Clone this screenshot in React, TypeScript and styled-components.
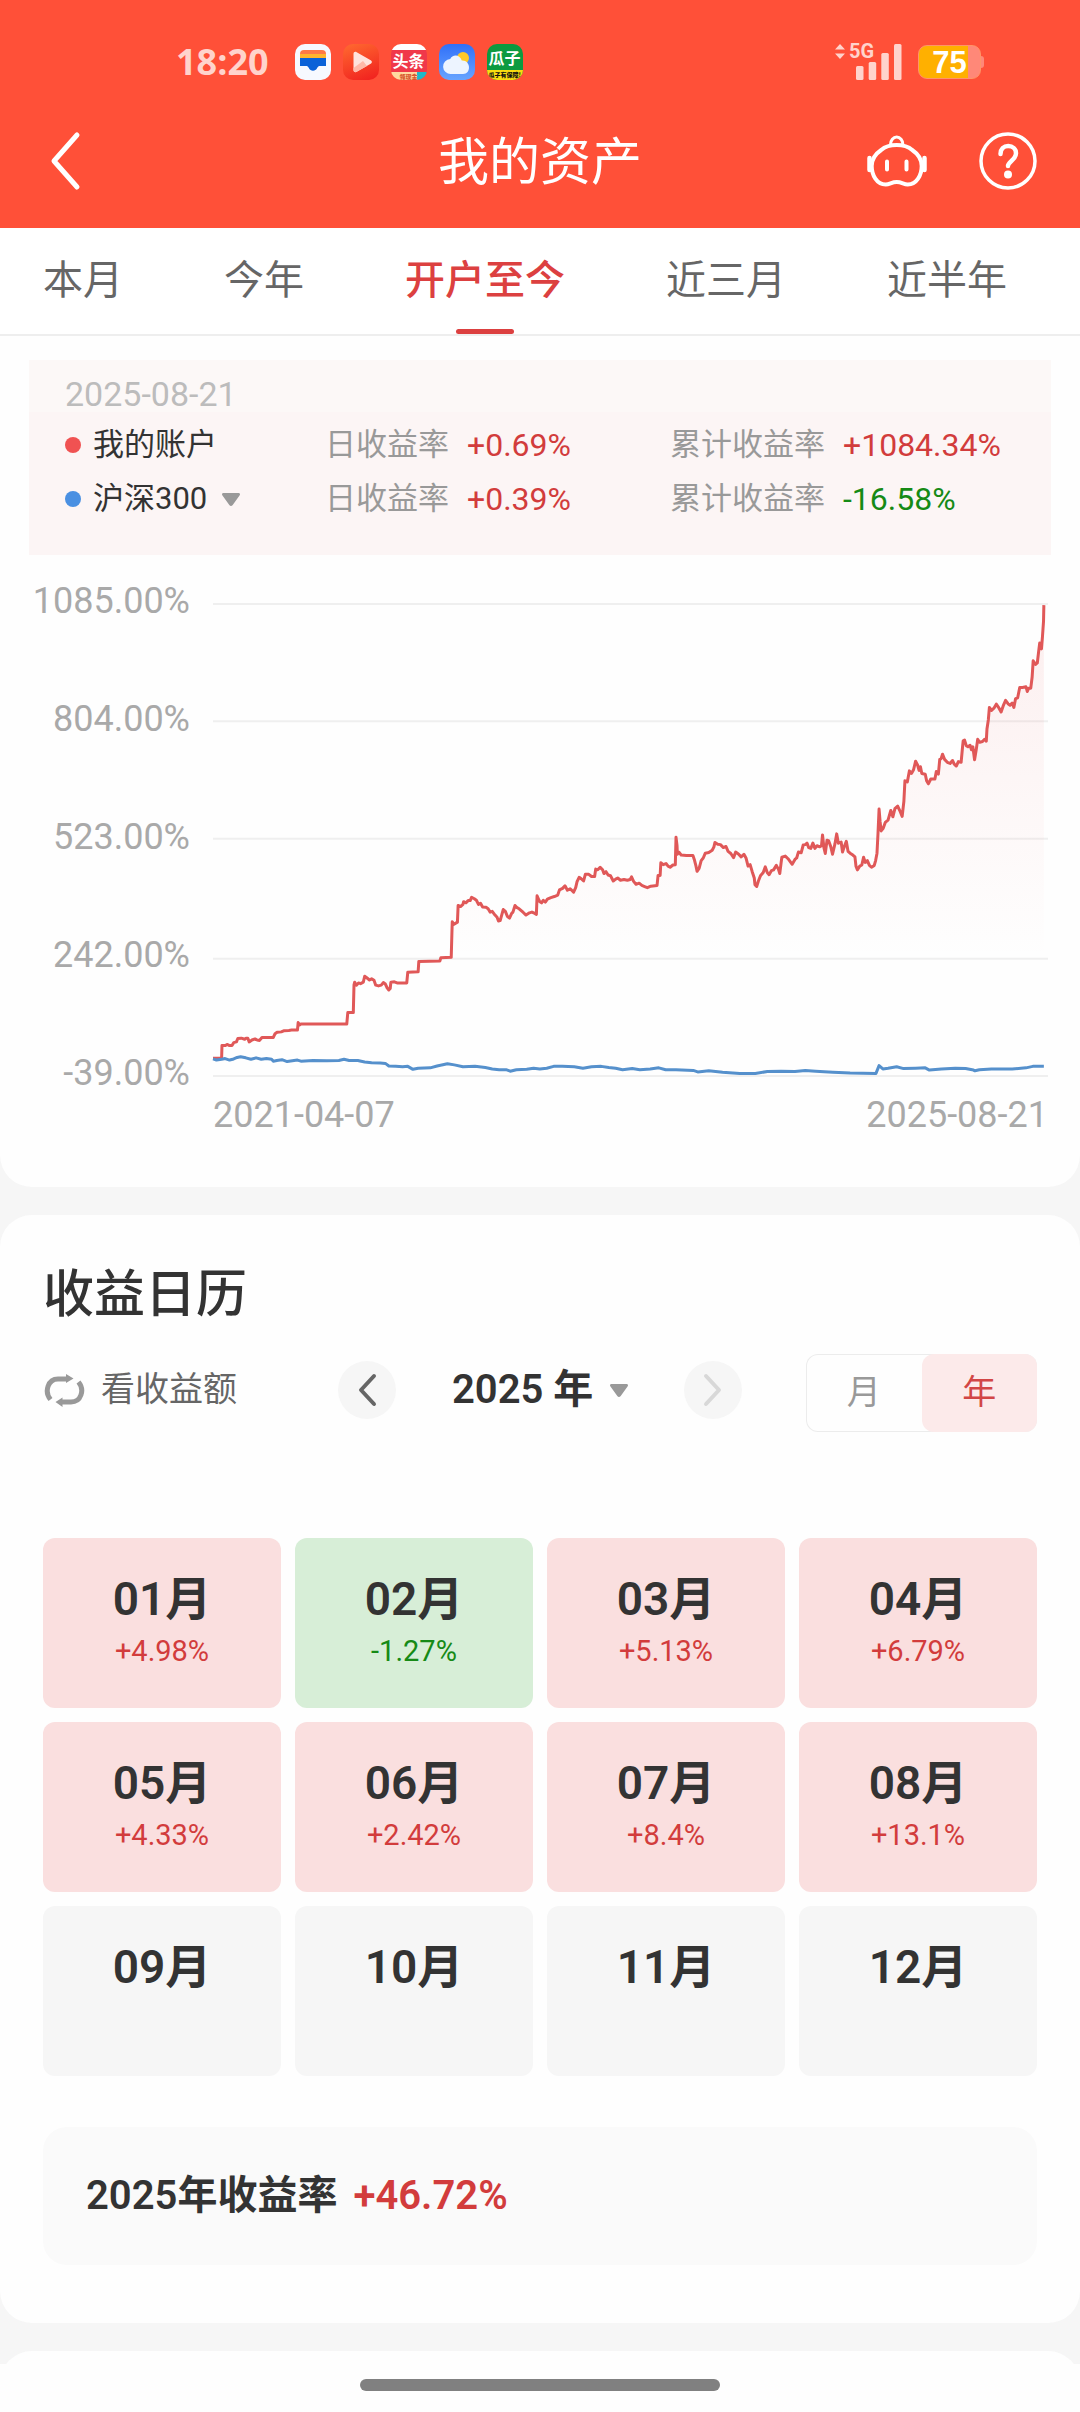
import React from 'react';
import styled, { createGlobalStyle, css } from 'styled-components';

const RED = '#d23c3c';
const GREEN = '#168a16';

const GlobalStyle = createGlobalStyle`
  * { box-sizing: border-box; }
  body {
    margin: 0;
    background: #f6f6f6;
    color: #333;
    font-family: Roboto, "Noto Sans CJK SC", sans-serif;
  }
  button, select {
    margin: 0;
    padding: 0;
    border: 0;
    background: none;
    color: inherit;
    font: inherit;
    cursor: pointer;
  }
  svg { display: block; flex: none; }
`;

/* ---------- top bar ---------- */

const Header = styled.header`
  padding-top: 32px;
  background: #ff5038;
  color: #fff;
`;

const StatusBar = styled.div`
  display: flex;
  justify-content: space-between;
  align-items: center;
  height: 60px;
  padding: 0 96px 0 176px;
`;

const StatusGroup = styled.div<{ $gap: number }>`
  display: flex;
  align-items: center;
  gap: ${(p) => p.$gap}px;
`;

const Clock = styled.time`
  margin-right: 14px;
  color: #ffd3cc;
  font: 700 36px/40px "Open Sans", sans-serif;
`;

const AppIcon = styled.span<{ $bg: string }>`
  display: flex;
  flex-direction: column;
  align-items: center;
  width: 36px;
  height: 36px;
  overflow: hidden;
  border-radius: 10px;
  background: ${(p) => p.$bg};
  color: #fff;
`;

const IconWord = styled.span<{ $low?: boolean }>`
  font: 700 16px/26px "Noto Sans CJK SC", sans-serif;
  ${(p) => p.$low && 'padding-top: 4px; line-height: 24px;'}
`;

const IconStrip = styled.span<{ $bg: string; $ink: string }>`
  width: 100%;
  height: 12px;
  background: ${(p) => p.$bg};
  color: ${(p) => p.$ink};
  font: 900 6px/9px "Noto Sans CJK SC", sans-serif;
  text-align: center;
  white-space: nowrap;
`;

const Network = styled.span`
  position: relative;
  display: block;
`;

const NetworkLabel = styled.span`
  position: absolute;
  left: 14px;
  top: -3px;
  color: #ffd3cc;
  font: 700 20px/22px Roboto, sans-serif;
`;

const Battery = styled.span`
  display: flex;
  align-items: center;
`;

const BatteryBody = styled.span`
  width: 63px;
  height: 34px;
  border-radius: 9px;
  border: 1px solid #ff9468;
  background: linear-gradient(90deg, #ffb000 80%, #ff8878 80%);
  font: 700 31px/34px "Liberation Sans", sans-serif;
  text-align: center;
`;

const BatteryTip = styled.span`
  width: 3px;
  height: 12px;
  border-radius: 0 3px 3px 0;
  background: #ff8878;
`;

const TitleBar = styled.div`
  display: grid;
  grid-template-columns: 1fr auto 1fr;
  align-items: center;
  height: 136px;
  padding: 2px 43px 0;
`;

const PageTitle = styled.h1`
  margin: 0;
  padding-top: 4px;
  font-size: 51px;
  font-weight: 400;
  line-height: 60px;
`;

const TitleActions = styled.div`
  display: flex;
  justify-content: flex-end;
  align-items: center;
  gap: 52px;
`;

const IconButton = styled.button`
  display: block;
  justify-self: start;
`;

/* ---------- period tabs ---------- */

const Tabs = styled.nav`
  display: flex;
  gap: 101px;
  height: 108px;
  padding: 0 43px;
  overflow: hidden;
  border-bottom: 2px solid #eee;
  background: #fff;
`;

const Tab = styled.button<{ $active: boolean }>`
  display: flex;
  flex-direction: column;
  align-items: center;
  justify-content: space-between;
  padding-top: 29px;
  font-size: 40px;
  line-height: 48px;
  white-space: nowrap;
  color: #666;
  ${(p) =>
    p.$active &&
    css`
      color: #dc4040;
      font-weight: 500;
      &::after {
        content: '';
        width: 58px;
        height: 5px;
        border-radius: 3px;
        background: #dc4040;
      }
    `}
`;

/* ---------- performance card ---------- */

const Card = styled.section<{ $first?: boolean }>`
  overflow: hidden;
  border-radius: ${(p) => (p.$first ? '0 0 32px 32px' : '32px')};
  background: #fefefe;
`;

const Legend = styled.div`
  margin: 24px 29px 0;
  padding: 10px 36px 29px;
  background: linear-gradient(#fcf8f7 52px, #fcf5f5 52px);
`;

const LegendDate = styled.time`
  display: block;
  color: #bcbcbc;
  font-size: 34px;
  line-height: 48px;
`;

const LegendRow = styled.div`
  display: grid;
  grid-template-columns: 260fr 345fr 345fr;
  align-items: center;
  height: 54px;
  font-size: 31px;
  line-height: 40px;
  white-space: nowrap;
`;

const SeriesName = styled.label`
  display: flex;
  align-items: center;
`;

const Dot = styled.i<{ $color: string }>`
  width: 16px;
  height: 16px;
  margin-right: 12px;
  border-radius: 50%;
  background: ${(p) => p.$color};
`;

const Picker = styled.select`
  appearance: none;
  outline: none;
`;

const BenchmarkPicker = styled(Picker)`
  margin-right: 14px;
`;

const Metric = styled.span`
  display: flex;
  gap: 18px;
  color: #999;
`;

const Rate = styled.span<{ $value: string }>`
  color: ${(p) => (p.$value.startsWith('-') ? GREEN : RED)};
`;

const LegendRate = styled(Rate)`
  font-size: 32px;
`;

const Chart = styled.div`
  display: flex;
  gap: 23px;
  padding: 26px 32px 52px 0;
  color: #a9a9a9;
  font-size: 36px;
  line-height: 40px;
`;

const ValueAxis = styled.div`
  display: flex;
  flex-direction: column;
  justify-content: space-between;
  width: 190px;
  height: 512px;
  text-align: right;
`;

const Plot = styled.div`
  flex: 1;
  padding-top: 23px;
`;

const PlotArea = styled.svg`
  width: 100%;
  height: 472px;
  overflow: visible;
`;

const DateAxis = styled.div`
  display: flex;
  justify-content: space-between;
  margin-top: 19px;
`;

/* ---------- calendar card ---------- */

const CalendarCard = styled(Card)`
  margin-top: 28px;
  padding: 50px 43px 58px;
`;

const SectionTitle = styled.h2`
  margin: 0;
  font-size: 51px;
  font-weight: 500;
  line-height: 60px;
`;

const Controls = styled.div`
  display: flex;
  align-items: center;
  height: 78px;
  margin-top: 29px;
`;

const SwitchMode = styled.button`
  display: flex;
  flex: 1;
  align-items: flex-end;
  gap: 16px;
  padding-bottom: 8px;
  color: #666;
  font-size: 34px;
  line-height: 48px;
`;

const YearNav = styled.div`
  display: flex;
  justify-content: space-between;
  align-items: center;
  width: 404px;
  margin-right: 64px;
  padding-bottom: 6px;
`;

const RoundButton = styled.button`
  display: grid;
  place-items: center;
  width: 58px;
  height: 58px;
  border-radius: 50%;
  background: #f6f6f6;
`;

const YearLabel = styled.label`
  display: flex;
  align-items: center;
  gap: 16px;
`;

const YearPicker = styled(Picker)`
  font-size: 40px;
  font-weight: 600;
  line-height: 48px;
`;

const Segmented = styled.div`
  display: flex;
  width: 231px;
  height: 78px;
  border-radius: 12px;
  box-shadow: inset 0 0 0 1px #ececec;
`;

const Segment = styled.button<{ $active: boolean }>`
  flex: 1;
  padding-bottom: 2px;
  border-radius: 12px;
  background: ${(p) => (p.$active ? '#fceaea' : 'transparent')};
  color: ${(p) => (p.$active ? '#d24646' : '#999')};
  font-size: 34px;
  line-height: 48px;
`;

const Months = styled.div`
  display: grid;
  grid-template-columns: repeat(4, 1fr);
  gap: 14px;
  margin-top: 106px;
`;

const MonthCell = styled.button<{ $tone: 'up' | 'down' | 'none' }>`
  display: flex;
  flex-direction: column;
  align-items: center;
  height: 170px;
  padding-top: 34px;
  border-radius: 12px;
  background: ${(p) => ({ up: '#fadfdf', down: '#d7eed7', none: '#f6f6f6' })[p.$tone]};
`;

const MonthName = styled.span`
  font-size: 46px;
  font-weight: 600;
  line-height: 54px;
`;

const MonthRate = styled(Rate)`
  font-size: 29px;
  line-height: 51px;
`;

const Summary = styled.p`
  display: flex;
  align-items: center;
  gap: 16px;
  height: 138px;
  margin: 51px 0 0;
  padding: 0 43px;
  border-radius: 24px;
  background: #fafafa;
  font-size: 40px;
  font-weight: 600;
  line-height: 48px;
`;

/* ---------- bottom ---------- */

const NextCardPeek = styled.div`
  height: 13px;
  margin-top: 28px;
  overflow: hidden;
  &::before {
    content: '';
    display: block;
    height: 64px;
    border-radius: 32px;
    background: #fefefe;
  }
`;

const GestureBar = styled.footer`
  display: flex;
  justify-content: center;
  height: 48px;
  padding-top: 15px;
  background: #fefefe;
  &::before {
    content: '';
    width: 360px;
    height: 12px;
    border-radius: 6px;
    background: #808080;
  }
`;

/* ---------- data ---------- */

const MIDPOINT = 1568;

const accountFirstHalf =
  '620,1318 645,1318 646,1284 655,1284 662,1281 668,1284 675,1284 680,1276 688,1274 692,1265 702,1264 712,1267 716,1264 721,1264 725,1274 733,1269 742,1266 748,1269 755,1270 762,1262 795,1262 800,1252 806,1248 818,1247 825,1244 840,1243 848,1242 865,1242 867,1222 872,1228 875,1226 1008,1226 1011,1195 1027,1195 1029,1120 1031,1113 1036,1121 1042,1115 1048,1117 1056,1113 1060,1097 1066,1101 1074,1107 1080,1104 1087,1108 1092,1121 1100,1123 1108,1121 1114,1114 1120,1118 1125,1128 1130,1134 1134,1130 1136,1113 1146,1112 1154,1115 1182,1115 1185,1086 1215,1085 1217,1057 1278,1056 1281,1047 1311,1046 1313,980 1314,950 1319,957 1329,951 1331,906 1338,909 1345,903 1347,896 1354,899 1360,893 1366,893 1370,884 1378,888 1384,892 1390,903 1396,900 1402,910 1412,911 1418,915 1424,924 1430,922 1438,932 1444,938 1448,948 1453,947 1458,930 1462,917 1468,922 1474,936 1480,940 1486,928 1490,924 1496,906 1502,912 1508,915 1514,920 1520,925 1528,932 1538,926 1545,924 1552,927 1558,930 1560,880 1566,893';

const accountSecondHalf =
  '0,896 5,899 10,892 16,897 22,889 32,885 42,882 52,878 57,864 66,860 73,853 80,865 88,861 98,870 104,858 108,842 114,830 120,834 127,840 132,822 142,822 150,828 159,828 162,808 168,810 175,803 182,810 186,820 192,815 198,824 205,826 213,840 220,835 226,832 234,838 244,836 254,838 262,836 266,829 272,841 279,849 288,846 296,852 304,855 312,858 322,854 340,852 343,825 349,825 351,791 358,796 366,793 372,800 378,803 386,797 393,796 395,722 398,745 399,768 403,762 410,770 425,771 444,771 448,782 453,800 456,814 462,806 468,785 474,778 480,765 490,763 500,757 505,748 508,736 516,741 524,742 532,750 540,747 546,760 554,766 562,777 568,762 576,767 584,775 592,768 598,778 604,800 610,796 616,815 622,832 624,850 629,855 634,840 640,826 648,817 654,802 660,818 665,823 672,812 678,810 686,798 692,808 696,820 700,790 702,776 712,773 720,780 732,795 740,782 745,778 750,762 758,764 764,743 770,742 775,738 780,750 786,752 792,738 798,752 804,745 812,748 817,745 820,716 824,750 828,766 833,730 838,732 844,748 849,768 856,740 861,713 866,738 874,735 878,762 884,745 889,733 894,760 900,765 908,770 914,775 917,800 921,810 928,800 934,797 939,776 944,790 950,785 956,798 962,803 970,798 974,785 978,765 981,710 984,646 987,680 990,705 996,698 1002,682 1010,676 1018,650 1024,667 1030,645 1038,638 1044,650 1051,666 1056,625 1059,570 1066,573 1072,543 1078,550 1084,540 1090,517 1096,528 1100,542 1104,532 1108,550 1118,552 1122,570 1127,578 1134,565 1146,565 1150,545 1156,552 1160,512 1164,510 1168,498 1174,512 1182,520 1190,523 1197,515 1202,525 1208,530 1214,518 1222,520 1226,480 1228,462 1232,460 1237,475 1242,478 1248,474 1252,486 1256,478 1261,513 1266,485 1270,458 1276,466 1284,464 1290,458 1295,463 1297,430 1301,405 1304,372 1310,380 1318,373 1324,363 1332,374 1338,384 1344,368 1351,353 1358,362 1364,366 1370,360 1375,372 1380,348 1386,346 1392,318 1400,318 1410,316 1414,329 1418,320 1424,320 1428,290 1431,246 1438,256 1443,252 1447,220 1450,198 1455,214 1458,180 1461,140 1462,96';

const benchmarkFirstHalf =
  '620,1320 630,1323 645,1321 655,1319 668,1323 680,1320 690,1316 700,1314 715,1317 730,1321 745,1317 760,1321 775,1319 790,1321 795,1326 805,1324 820,1322 835,1327 850,1325 865,1323 875,1326 910,1324 950,1325 985,1324 1000,1321 1015,1324 1040,1324 1060,1328 1080,1330 1105,1331 1120,1332 1130,1339 1150,1340 1170,1341 1185,1340 1200,1348 1215,1345 1250,1344 1270,1339 1300,1333 1320,1336 1345,1341 1380,1340 1410,1343 1430,1347 1450,1349 1470,1349 1482,1353 1500,1349 1530,1348 1550,1345';

const benchmarkSecondHalf =
  '0,1347 20,1345 40,1340 65,1340 100,1341 125,1345 150,1341 178,1340 200,1343 220,1345 240,1349 268,1346 290,1349 320,1347 345,1344 365,1349 395,1349 445,1351 458,1355 490,1352 530,1356 580,1359 625,1359 660,1354 700,1353 740,1354 770,1351 800,1353 850,1356 900,1358 975,1359 984,1338 995,1347 1010,1345 1035,1341 1055,1346 1090,1345 1118,1344 1130,1350 1165,1347 1205,1345 1235,1346 1258,1350 1262,1352 1275,1349 1310,1347 1370,1347 1410,1344 1430,1340 1462,1340';

/* Joins the two halves of a series into one polyline. */
const joinHalves = (first: string, second: string) =>
  first +
  ' ' +
  second
    .split(' ')
    .map((pair) => {
      const [x, y] = pair.split(',').map(Number);
      return `${x + MIDPOINT},${y}`;
    })
    .join(' ');

const accountLine = joinHalves(accountFirstHalf, accountSecondHalf);
const benchmarkLine = joinHalves(benchmarkFirstHalf, benchmarkSecondHalf);

const gridLines = [93, 409, 726, 1050, 1366];
const axisValues = ['1085.00%', '804.00%', '523.00%', '242.00%', '-39.00%'];
const periods = ['本月', '今年', '开户至今', '近三月', '近半年'];
const monthRates = ['+4.98%', '-1.27%', '+5.13%', '+6.79%', '+4.33%', '+2.42%', '+8.4%', '+13.1%', '', '', '', ''];

const toneOf = (rate: string) => (rate === '' ? 'none' : rate.startsWith('-') ? 'down' : 'up');

/* ---------- icons ---------- */

const Triangle = () => (
  <svg width="18" height="13" viewBox="0 0 18 13" aria-hidden="true">
    <path d="M1.5 0h15c1.300 0 1.900 1.200 1.200 2.200l-7 9.800c-.9 1.300-2.500 1.300-3.400 0l-7-9.800C-.4 1.200.2 0 1.500 0z" fill="#999" />
  </svg>
);

const BackIcon = () => (
  <svg width="46" height="60" viewBox="0 0 46 60" aria-hidden="true">
    <path d="M34 4 11 30l23 26" fill="none" stroke="#fff" strokeWidth="5" strokeLinecap="round" strokeLinejoin="round" />
  </svg>
);

const RobotIcon = () => (
  <svg width="60" height="54" viewBox="0 0 60 54" fill="none" stroke="#fff" aria-hidden="true">
    <path d="M23.500 10.500a6.200 7.500 0 0 1 12.400 0" strokeWidth="3" />
    <path
      d="M29.700 11c-6 0-11 1-15.500 5C7.500 20.500 4.700 27 4.700 32c0 9 5 18.500 14 18.500 4 0 6-2.500 11-2.500s7 2.500 11 2.500c9 0 14-9.500 14-18.500 0-5-2.800-11.500-9.500-16-4.500-4-9.500-5-15.500-5z"
      strokeWidth="4"
    />
    <path d="M2.500 24v12M57.500 24v12" strokeWidth="4.500" strokeLinecap="round" />
    <path d="M20 27.500v8M39.500 27.500v8" strokeWidth="4" strokeLinecap="round" />
  </svg>
);

const HelpIcon = () => (
  <svg width="58" height="58" viewBox="0 0 58 58" fill="none" stroke="#fff" aria-hidden="true">
    <circle cx="29" cy="29" r="27" strokeWidth="3.500" />
    <path d="M21.500 22c0-4.800 3.300-8 7.700-8 4.600 0 7.800 3 7.800 7.200 0 3.400-1.900 5.200-4.300 7.500-2.600 2.400-3.700 3.300-3.700 5.300" strokeWidth="4.500" strokeLinecap="round" />
    <circle cx="29" cy="42.500" r="4" fill="#fff" stroke="none" />
  </svg>
);

const SwapIcon = () => (
  <svg width="42" height="40" viewBox="0 0 42 40" aria-hidden="true">
    <g fill="none" stroke="#999" strokeWidth="5">
      <path d="M7.500 26.500C1 18.500 5 6 15 6h8" />
      <path d="M35.500 9C42 17 38 29 28 29h-10" />
    </g>
    <path d="M23 1l7.500 4.500-7.500 4.500zM19.500 24.500v9.500l-7-5z" fill="#999" />
  </svg>
);

const Chevron = ({ flip, color }: { flip?: boolean; color: string }) => (
  <svg width="20" height="34" viewBox="0 0 20 34" aria-hidden="true">
    <path d={flip ? 'M3 3l13 14-13 14' : 'M17 3 4 17l13 14'} fill="none" stroke={color} strokeWidth="4" strokeLinecap="round" strokeLinejoin="round" />
  </svg>
);

const WalletArt = () => (
  <svg width="36" height="36" viewBox="0 0 36 36" aria-hidden="true">
    <path d="M5 10a4 4 0 0 1 4-4h18a4 4 0 0 1 4 4v4H5z" fill="#ff7a45" />
    <path d="M5 10h26v5H5z" fill="#ffb52e" />
    <path d="M5 14h26v8h-6c-1.500 0-2 .6-2.800 2-1.800 3.500-6.600 3.500-8.400 0-.8-1.400-1.300-2-2.800-2H5z" fill="#0a62d8" />
  </svg>
);

const PlayArt = () => (
  <svg width="36" height="36" viewBox="0 0 36 36" aria-hidden="true">
    <path d="M10.500 10c0-2 1.600-2.700 3.200-1.800l14 8c1.600.9 1.600 2.700 0 3.600l-14 8c-1.600.9-3.200.2-3.200-1.800z" fill="#ffe3dc" />
    <path d="M10.500 24 20 17l4 5-10.300 5.800c-1.600.9-3.200.2-3.200-1.800z" fill="#ffb9a8" />
  </svg>
);

const WeatherArt = () => (
  <svg width="36" height="36" viewBox="0 0 36 36" aria-hidden="true">
    <circle cx="24" cy="14" r="6" fill="#ffc928" />
    <path d="M12 30a7.500 7.500 0 0 1-.8-15C13 10.500 20.500 9.500 22.800 16.500 32 16 32.500 30 24 30z" fill="#edf4ff" />
  </svg>
);

const SignalArt = () => (
  <svg width="68" height="38" viewBox="0 0 68 38" fill="#ffd3cc" aria-hidden="true">
    <path d="M0 6.500 5 1l5 5.500zM0 10.500h10L5 16z" />
    <rect x="21" y="23" width="7.500" height="14" rx="1.500" />
    <rect x="33.700" y="19" width="7.500" height="18" rx="1.500" />
    <rect x="46.300" y="10" width="7.500" height="27" rx="1.500" />
    <rect x="59" y="1" width="7.500" height="36" rx="1.500" />
  </svg>
);

/* ---------- page ---------- */

const TopBar = () => (
  <Header>
    <StatusBar>
      <StatusGroup $gap={12}>
        <Clock>18:20</Clock>
        <AppIcon $bg="#f6f9ff"><WalletArt /></AppIcon>
        <AppIcon $bg="linear-gradient(160deg, #ff6a30, #f01e1e)"><PlayArt /></AppIcon>
        <AppIcon $bg="linear-gradient(#fff 6px, #f0384a 6px)">
          <IconWord $low>头条</IconWord>
          <IconStrip $bg="linear-gradient(90deg, #ffd9a0 72%, #20b8c8 72%)" $ink="#d8552c">领现金</IconStrip>
        </AppIcon>
        <AppIcon $bg="linear-gradient(#3070f8, #68a4ff)"><WeatherArt /></AppIcon>
        <AppIcon $bg="#0c9a40">
          <IconWord>瓜子</IconWord>
          <IconStrip $bg="#f8dc10" $ink="#111">瓜子有保障!</IconStrip>
        </AppIcon>
      </StatusGroup>
      <StatusGroup $gap={15}>
        <Network>
          <SignalArt />
          <NetworkLabel>5G</NetworkLabel>
        </Network>
        <Battery>
          <BatteryBody>75</BatteryBody>
          <BatteryTip />
        </Battery>
      </StatusGroup>
    </StatusBar>
    <TitleBar>
      <IconButton aria-label="返回"><BackIcon /></IconButton>
      <PageTitle>我的资产</PageTitle>
      <TitleActions>
        <IconButton aria-label="智能客服"><RobotIcon /></IconButton>
        <IconButton aria-label="帮助"><HelpIcon /></IconButton>
      </TitleActions>
    </TitleBar>
  </Header>
);

const Rates = ({ daily, total }: { daily: string; total: string }) => (
  <>
    <Metric>日收益率<LegendRate $value={daily}>{daily}</LegendRate></Metric>
    <Metric>累计收益率<LegendRate $value={total}>{total}</LegendRate></Metric>
  </>
);

const Performance = () => (
  <Card $first>
    <Tabs>
      {periods.map((name) => (
        <Tab key={name} $active={name === '开户至今'}>{name}</Tab>
      ))}
    </Tabs>
    <Legend>
      <LegendDate>2025-08-21</LegendDate>
      <LegendRow>
        <SeriesName as="span"><Dot $color="#f05252" />我的账户</SeriesName>
        <Rates daily="+0.69%" total="+1084.34%" />
      </LegendRow>
      <LegendRow>
        <SeriesName>
          <Dot $color="#4a90e2" />
          <BenchmarkPicker aria-label="对比指数"><option>沪深300</option></BenchmarkPicker>
          <Triangle />
        </SeriesName>
        <Rates daily="+0.39%" total="-16.58%" />
      </LegendRow>
    </Legend>
    <Chart>
      <ValueAxis>
        {axisValues.map((value) => <span key={value}>{value}</span>)}
      </ValueAxis>
      <Plot>
        <PlotArea viewBox="620 93 2422 1273" preserveAspectRatio="none" role="img" aria-label="收益率走势">
          <defs>
            <linearGradient id="fill" gradientUnits="userSpaceOnUse" x1="0" y1="93" x2="0" y2="1050">
              <stop offset="0" stopColor="#e85050" stopOpacity="0.09" />
              <stop offset="1" stopColor="#e85050" stopOpacity="0" />
            </linearGradient>
          </defs>
          {gridLines.map((y) => (
            <path key={y} d={`M620 ${y}H3042`} stroke="#efefef" strokeWidth="2" vectorEffect="non-scaling-stroke" />
          ))}
          <polygon points={`620,1366 ${accountLine} 3030,1366`} fill="url(#fill)" />
          <polyline points={accountLine} fill="none" stroke="#e05858" strokeWidth="3" strokeLinejoin="round" vectorEffect="non-scaling-stroke" />
          <polyline points={benchmarkLine} fill="none" stroke="#5590cc" strokeWidth="3" strokeLinejoin="round" vectorEffect="non-scaling-stroke" />
        </PlotArea>
        <DateAxis>
          <span>2021-04-07</span>
          <span>2025-08-21</span>
        </DateAxis>
      </Plot>
    </Chart>
  </Card>
);

const Calendar = () => (
  <CalendarCard>
    <SectionTitle>收益日历</SectionTitle>
    <Controls>
      <SwitchMode><SwapIcon />看收益额</SwitchMode>
      <YearNav>
        <RoundButton aria-label="上一年"><Chevron color="#666" /></RoundButton>
        <YearLabel>
          <YearPicker aria-label="年份"><option>2025 年</option></YearPicker>
          <Triangle />
        </YearLabel>
        <RoundButton aria-label="下一年"><Chevron flip color="#d8d8d8" /></RoundButton>
      </YearNav>
      <Segmented>
        <Segment $active={false}>月</Segment>
        <Segment $active>年</Segment>
      </Segmented>
    </Controls>
    <Months>
      {monthRates.map((rate, index) => (
        <MonthCell key={index} $tone={toneOf(rate)}>
          <MonthName>{String(index + 1).padStart(2, '0')}月</MonthName>
          {rate && <MonthRate $value={rate}>{rate}</MonthRate>}
        </MonthCell>
      ))}
    </Months>
    <Summary>
      2025年收益率
      <Rate $value="+46.72%">+46.72%</Rate>
    </Summary>
  </CalendarCard>
);

export default function App() {
  return (
    <>
      <GlobalStyle />
      <TopBar />
      <main>
        <Performance />
        <Calendar />
        <NextCardPeek />
      </main>
      <GestureBar />
    </>
  );
}
